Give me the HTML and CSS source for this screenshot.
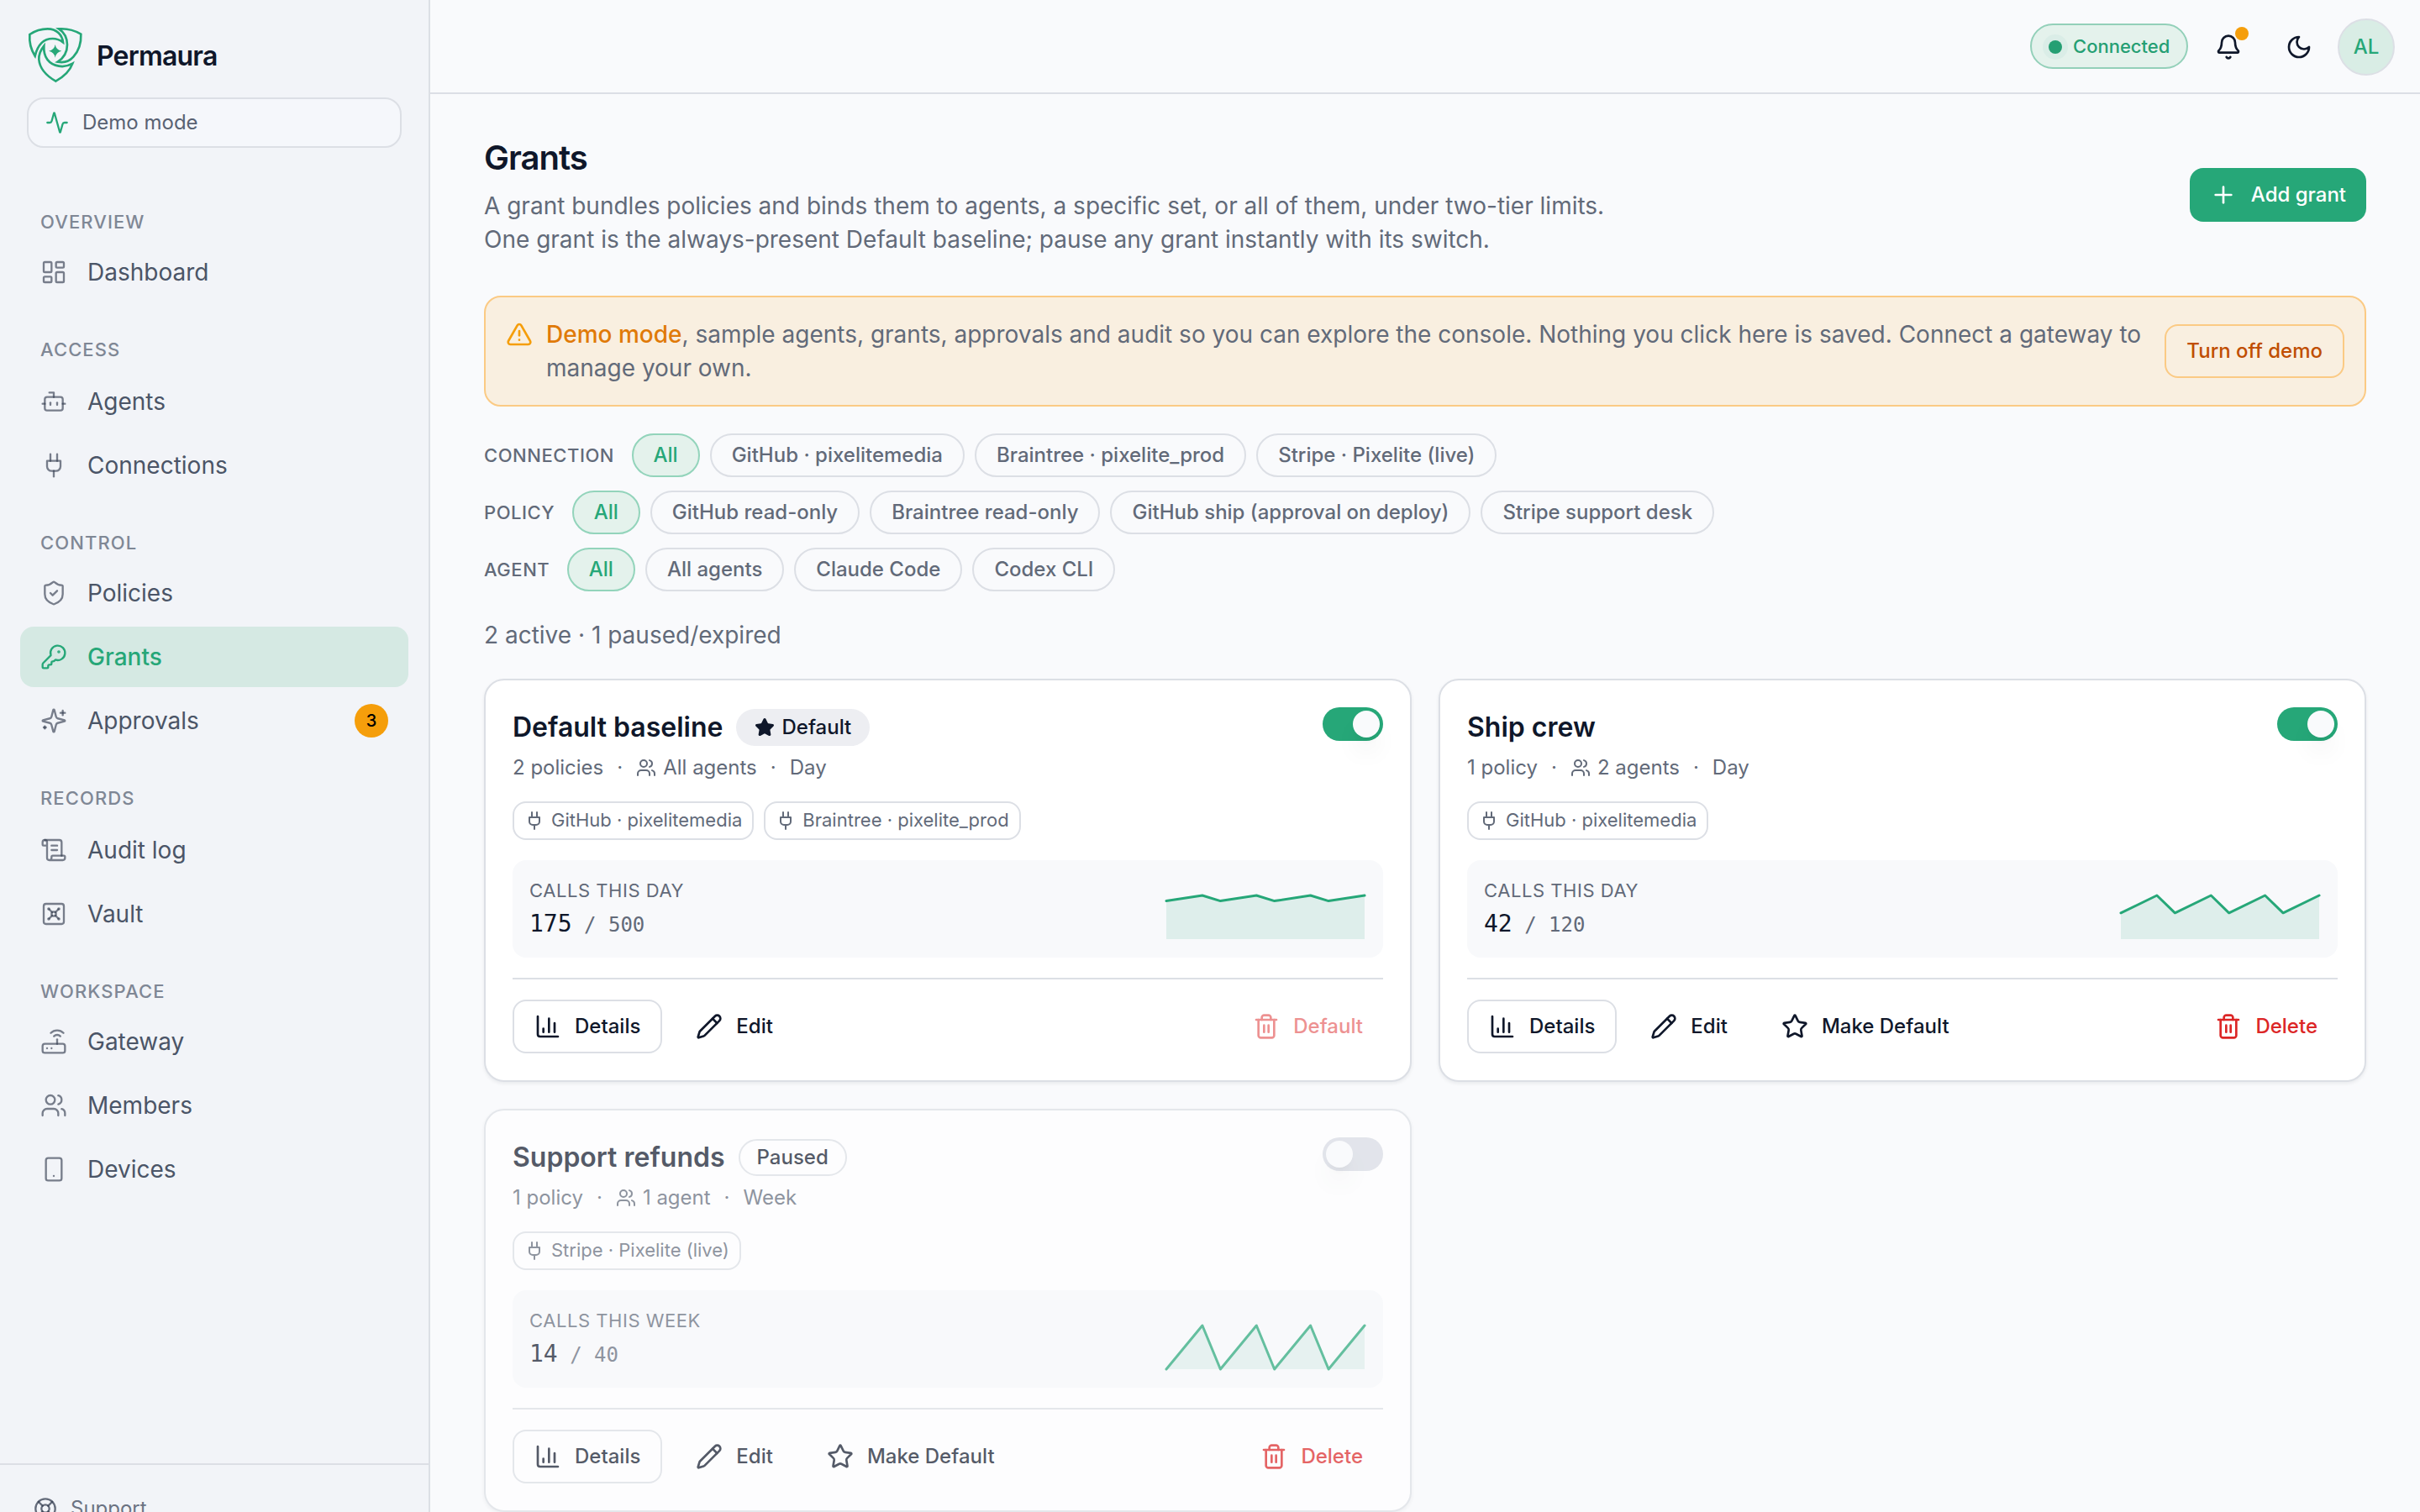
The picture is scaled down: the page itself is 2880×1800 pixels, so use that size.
FILE: index.html
```
<!DOCTYPE html>
<html lang="en">
<head>
<meta charset="utf-8">
<title>Grants · Permaura</title>
<link rel="stylesheet" href="styles.css">
</head>
<body>
<svg class="sprite" aria-hidden="true">
  <symbol id="activity" viewBox="0 0 24 24"><path d="M22 12h-2.48a2 2 0 0 0-1.93 1.46l-2.35 8.36a.25.25 0 0 1-.48 0L9.24 2.18a.25.25 0 0 0-.48 0l-2.35 8.36A2 2 0 0 1 4.49 12H2"/></symbol>
  <symbol id="dashboard" viewBox="0 0 24 24"><rect width="7" height="9" x="3" y="3" rx="1"/><rect width="7" height="5" x="14" y="3" rx="1"/><rect width="7" height="9" x="14" y="12" rx="1"/><rect width="7" height="5" x="3" y="16" rx="1"/></symbol>
  <symbol id="bot" viewBox="0 0 24 24"><path d="M12 8V4H8"/><rect width="16" height="12" x="4" y="8" rx="2"/><path d="M2 14h2"/><path d="M20 14h2"/><path d="M15 13v2"/><path d="M9 13v2"/></symbol>
  <symbol id="plug" viewBox="0 0 24 24"><path d="M12 22v-5"/><path d="M9 8V2"/><path d="M15 8V2"/><path d="M18 8v5a4 4 0 0 1-4 4h-4a4 4 0 0 1-4-4V8Z"/></symbol>
  <symbol id="shield" viewBox="0 0 24 24"><path d="M20 13c0 5-3.5 7.5-7.66 8.95a1 1 0 0 1-.67-.01C7.5 20.5 4 18 4 13V6a1 1 0 0 1 1-1c2 0 4.5-1.2 6.24-2.72a1.17 1.17 0 0 1 1.52 0C14.51 3.81 17 5 19 5a1 1 0 0 1 1 1z"/><path d="m9 12 2 2 4-4"/></symbol>
  <symbol id="key" viewBox="0 0 24 24"><path d="M2.586 17.414A2 2 0 0 0 2 18.828V21a1 1 0 0 0 1 1h3a1 1 0 0 0 1-1v-1a1 1 0 0 1 1-1h1a1 1 0 0 0 1-1v-1a1 1 0 0 1 1-1h.172a2 2 0 0 0 1.414-.586l.814-.814a6.5 6.5 0 1 0-4-4z"/><circle cx="16.5" cy="7.5" r=".5" fill="currentColor"/></symbol>
  <symbol id="sparkles" viewBox="0 0 24 24"><path d="M9.937 15.5A2 2 0 0 0 8.5 14.063l-6.135-1.582a.5.5 0 0 1 0-.962L8.5 9.936A2 2 0 0 0 9.937 8.5l1.582-6.135a.5.5 0 0 1 .963 0L14.063 8.5A2 2 0 0 0 15.5 9.937l6.135 1.581a.5.5 0 0 1 0 .964L15.5 14.063a2 2 0 0 0-1.437 1.437l-1.582 6.135a.5.5 0 0 1-.963 0z"/><path d="M20 3v4"/><path d="M22 5h-4"/><path d="M4 17v2"/><path d="M5 18H3"/></symbol>
  <symbol id="scroll" viewBox="0 0 24 24"><path d="M15 12h-5"/><path d="M15 8h-5"/><path d="M19 17V5a2 2 0 0 0-2-2H4"/><path d="M8 21h12a2 2 0 0 0 2-2v-1a1 1 0 0 0-1-1H11a1 1 0 0 0-1 1v1a2 2 0 1 1-4 0V5a2 2 0 1 0-4 0v2a1 1 0 0 0 1 1h3"/></symbol>
  <symbol id="vault" viewBox="0 0 24 24"><rect width="18" height="18" x="3" y="3" rx="2"/><circle cx="7.5" cy="7.5" r=".5" fill="currentColor"/><path d="m7.9 7.9 2.7 2.7"/><circle cx="16.5" cy="7.5" r=".5" fill="currentColor"/><path d="m13.4 10.6 2.7-2.7"/><circle cx="7.5" cy="16.5" r=".5" fill="currentColor"/><path d="m7.9 16.1 2.7-2.7"/><circle cx="16.5" cy="16.5" r=".5" fill="currentColor"/><path d="m13.4 13.4 2.7 2.7"/><circle cx="12" cy="12" r="2"/></symbol>
  <symbol id="router" viewBox="0 0 24 24"><rect width="20" height="8" x="2" y="14" rx="2"/><path d="M6.01 18H6"/><path d="M10.01 18H10"/><path d="M15 10v4"/><path d="M17.84 7.17a4 4 0 0 0-5.66 0"/><path d="M20.66 4.34a8 8 0 0 0-11.31 0"/></symbol>
  <symbol id="users" viewBox="0 0 24 24"><path d="M16 21v-2a4 4 0 0 0-4-4H6a4 4 0 0 0-4 4v2"/><circle cx="9" cy="7" r="4"/><path d="M22 21v-2a4 4 0 0 0-3-3.87"/><path d="M16 3.13a4 4 0 0 1 0 7.75"/></symbol>
  <symbol id="phone" viewBox="0 0 24 24"><rect width="14" height="20" x="5" y="2" rx="2"/><path d="M12 18h.01"/></symbol>
  <symbol id="buoy" viewBox="0 0 24 24"><circle cx="12" cy="12" r="10"/><path d="m4.93 4.93 4.24 4.24"/><path d="m14.83 9.17 4.24-4.24"/><path d="m14.83 14.83 4.24 4.24"/><path d="m9.17 14.83-4.24 4.24"/><circle cx="12" cy="12" r="4"/></symbol>
  <symbol id="bell" viewBox="0 0 24 24"><path d="M10.268 21a2 2 0 0 0 3.464 0"/><path d="M3.262 15.326A1 1 0 0 0 4 17h16a1 1 0 0 0 .74-1.673C19.41 13.956 18 12.499 18 8A6 6 0 0 0 6 8c0 4.499-1.411 5.956-2.738 7.326"/></symbol>
  <symbol id="moon" viewBox="0 0 24 24"><path d="M12 3a6 6 0 0 0 9 9 9 9 0 1 1-9-9Z"/></symbol>
  <symbol id="plus" viewBox="0 0 24 24"><path d="M5 12h14"/><path d="M12 5v14"/></symbol>
  <symbol id="alert" viewBox="0 0 24 24"><path d="m21.73 18-8-14a2 2 0 0 0-3.48 0l-8 14A2 2 0 0 0 4 21h16a2 2 0 0 0 1.73-3"/><path d="M12 9v4"/><path d="M12 17h.01"/></symbol>
  <symbol id="chart" viewBox="0 0 24 24"><path d="M3 3v16a2 2 0 0 0 2 2h16"/><path d="M18 17V9"/><path d="M13 17V5"/><path d="M8 17v-3"/></symbol>
  <symbol id="pencil" viewBox="0 0 24 24"><path d="M21.174 6.812a1 1 0 0 0-3.986-3.987L3.842 16.174a2 2 0 0 0-.5.83l-1.321 4.352a.5.5 0 0 0 .623.622l4.353-1.32a2 2 0 0 0 .83-.497z"/><path d="m15 5 4 4"/></symbol>
  <symbol id="star" viewBox="0 0 24 24"><path d="M11.525 2.295a.53.53 0 0 1 .95 0l2.31 4.679a2.123 2.123 0 0 0 1.595 1.16l5.166.756a.53.53 0 0 1 .294.904l-3.736 3.638a2.123 2.123 0 0 0-.611 1.878l.882 5.14a.53.53 0 0 1-.771.56l-4.618-2.428a2.122 2.122 0 0 0-1.973 0L6.396 21.01a.53.53 0 0 1-.77-.56l.881-5.139a2.122 2.122 0 0 0-.611-1.879L2.16 9.795a.53.53 0 0 1 .294-.906l5.165-.755a2.122 2.122 0 0 0 1.597-1.16z"/></symbol>
  <symbol id="trash" viewBox="0 0 24 24"><path d="M3 6h18"/><path d="M19 6v14c0 1-1 2-2 2H7c-1 0-2-1-2-2V6"/><path d="M8 6V4c0-1 1-2 2-2h4c1 0 2 1 2 2v2"/><path d="M10 11v6"/><path d="M14 11v6"/></symbol>
</svg>

<div class="app">
  <aside class="sidebar">
    <div class="brand">
      <svg class="brand-mark" viewBox="96 93 204 204">
        <path d="M106 123C125 110 148 103 170 103C202 103 222 124 225 151C212 141 199 138 188 138C155 138 134 162 125 200C111 178 104 150 106 123Z"/>
        <path d="M210 103C240 101 266 108 289 122C290 150 285 178 262 203C248 219 228 225 206 221C228 207 240 188 240 160C240 136 230 116 210 103Z"/>
        <path d="M157 164C144 180 138 196 139 213C142 245 168 272 199 290C230 273 250 252 259 227C243 236 226 239 210 236C176 231 154 205 157 164Z"/>
        <path class="spark" d="M197 159Q200 178 220 182Q200 186 197 206Q194 186 174 182Q194 178 197 159Z"/>
      </svg>
      <span class="brand-name">Permaura</span>
    </div>
    <div class="mode"><svg class="icon icon-mode"><use href="#activity"/></svg><span>Demo mode</span></div>
    <nav class="nav">
      <section class="group">
        <h2 class="group-title">OVERVIEW</h2>
        <a class="item"><svg class="icon"><use href="#dashboard"/></svg>Dashboard</a>
      </section>
      <section class="group">
        <h2 class="group-title">ACCESS</h2>
        <a class="item"><svg class="icon"><use href="#bot"/></svg>Agents</a>
        <a class="item"><svg class="icon"><use href="#plug"/></svg>Connections</a>
      </section>
      <section class="group">
        <h2 class="group-title">CONTROL</h2>
        <a class="item"><svg class="icon"><use href="#shield"/></svg>Policies</a>
        <a class="item active"><svg class="icon"><use href="#key"/></svg>Grants</a>
        <a class="item"><svg class="icon"><use href="#sparkles"/></svg>Approvals<span class="count">3</span></a>
      </section>
      <section class="group">
        <h2 class="group-title">RECORDS</h2>
        <a class="item"><svg class="icon"><use href="#scroll"/></svg>Audit log</a>
        <a class="item"><svg class="icon"><use href="#vault"/></svg>Vault</a>
      </section>
      <section class="group">
        <h2 class="group-title">WORKSPACE</h2>
        <a class="item"><svg class="icon"><use href="#router"/></svg>Gateway</a>
        <a class="item"><svg class="icon"><use href="#users"/></svg>Members</a>
        <a class="item"><svg class="icon"><use href="#phone"/></svg>Devices</a>
      </section>
    </nav>
    <div class="sidebar-foot"><a class="support"><svg class="icon icon-mode"><use href="#buoy"/></svg>Support</a></div>
  </aside>

  <div class="page">
    <header class="topbar">
      <span class="status"><i class="status-dot"></i>Connected</span>
      <span class="top-icon"><svg class="icon"><use href="#bell"/></svg><i class="notice"></i></span>
      <span class="top-icon"><svg class="icon"><use href="#moon"/></svg></span>
      <span class="avatar">AL</span>
    </header>

    <main class="main">
      <div class="head">
        <div>
          <h1 class="title">Grants</h1>
          <p class="lead">A grant bundles policies and binds them to agents, a specific set, or all of them, under two-tier limits.<br>One grant is the always-present Default baseline; pause any grant instantly with its switch.</p>
        </div>
        <button class="btn primary"><svg class="icon"><use href="#plus"/></svg>Add grant</button>
      </div>

      <div class="banner">
        <svg class="icon banner-icon"><use href="#alert"/></svg>
        <p class="banner-text"><strong>Demo mode</strong>, sample agents, grants, approvals and audit so you can explore the console. Nothing you click here is saved. Connect a gateway to manage your own.</p>
        <button class="btn warn">Turn off demo</button>
      </div>

      <div class="filters">
        <div class="filter"><span class="filter-label">CONNECTION</span><div class="pills"><span class="pill on">All</span><span class="pill">GitHub · pixelitemedia</span><span class="pill">Braintree · pixelite_prod</span><span class="pill">Stripe · Pixelite (live)</span></div></div>
        <div class="filter"><span class="filter-label">POLICY</span><div class="pills"><span class="pill on">All</span><span class="pill">GitHub read-only</span><span class="pill">Braintree read-only</span><span class="pill">GitHub ship (approval on deploy)</span><span class="pill">Stripe support desk</span></div></div>
        <div class="filter"><span class="filter-label">AGENT</span><div class="pills"><span class="pill on">All</span><span class="pill">All agents</span><span class="pill">Claude Code</span><span class="pill">Codex CLI</span></div></div>
      </div>

      <p class="summary">2 active · 1 paused/expired</p>

      <div class="cards">
        <article class="card">
          <div class="card-head">
            <div>
              <div class="card-title"><h3>Default baseline</h3><span class="badge solid"><svg class="icon sm filled"><use href="#star"/></svg>Default</span></div>
              <div class="meta"><span>2 policies</span><span>·</span><span class="with-icon"><svg class="icon sm"><use href="#users"/></svg>All agents</span><span>·</span><span>Day</span></div>
            </div>
            <span class="switch on"><i class="knob"></i></span>
          </div>
          <div class="tags"><span class="tag"><svg class="icon sm"><use href="#plug"/></svg>GitHub · pixelitemedia</span><span class="tag"><svg class="icon sm"><use href="#plug"/></svg>Braintree · pixelite_prod</span></div>
          <div class="usage">
            <div><div class="usage-label">CALLS THIS DAY</div><div class="usage-value"><b>175</b> <span>/ 500</span></div></div>
            <svg class="spark-chart" viewBox="0 0 240 56"><path class="area" d="M2 8.6L44.9 2L66.4 8.6L109.3 2L130.7 8.6L173.6 2L195.1 8.6L238 2V54H2Z"/><path class="line" d="M2 8.6L44.9 2L66.4 8.6L109.3 2L130.7 8.6L173.6 2L195.1 8.6L238 2"/></svg>
          </div>
          <div class="actions">
            <button class="btn outline"><svg class="icon"><use href="#chart"/></svg>Details</button>
            <button class="btn ghost"><svg class="icon"><use href="#pencil"/></svg>Edit</button>
            <button class="btn ghost danger disabled"><svg class="icon"><use href="#trash"/></svg>Default</button>
          </div>
        </article>

        <article class="card">
          <div class="card-head">
            <div>
              <div class="card-title"><h3>Ship crew</h3></div>
              <div class="meta"><span>1 policy</span><span>·</span><span class="with-icon"><svg class="icon sm"><use href="#users"/></svg>2 agents</span><span>·</span><span>Day</span></div>
            </div>
            <span class="switch on"><i class="knob"></i></span>
          </div>
          <div class="tags"><span class="tag"><svg class="icon sm"><use href="#plug"/></svg>GitHub · pixelitemedia</span></div>
          <div class="usage">
            <div><div class="usage-label">CALLS THIS DAY</div><div class="usage-value"><b>42</b> <span>/ 120</span></div></div>
            <svg class="spark-chart" viewBox="0 0 240 56"><path class="area" d="M2 22.8L44.9 2L66.4 22.8L109.3 2L130.7 22.8L173.6 2L195.1 22.8L238 2V54H2Z"/><path class="line" d="M2 22.8L44.9 2L66.4 22.8L109.3 2L130.7 22.8L173.6 2L195.1 22.8L238 2"/></svg>
          </div>
          <div class="actions">
            <button class="btn outline"><svg class="icon"><use href="#chart"/></svg>Details</button>
            <button class="btn ghost"><svg class="icon"><use href="#pencil"/></svg>Edit</button>
            <button class="btn ghost"><svg class="icon"><use href="#star"/></svg>Make Default</button>
            <button class="btn ghost danger"><svg class="icon"><use href="#trash"/></svg>Delete</button>
          </div>
        </article>

        <article class="card paused">
          <div class="card-head">
            <div>
              <div class="card-title"><h3>Support refunds</h3><span class="badge">Paused</span></div>
              <div class="meta"><span>1 policy</span><span>·</span><span class="with-icon"><svg class="icon sm"><use href="#users"/></svg>1 agent</span><span>·</span><span>Week</span></div>
            </div>
            <span class="switch"><i class="knob"></i></span>
          </div>
          <div class="tags"><span class="tag"><svg class="icon sm"><use href="#plug"/></svg>Stripe · Pixelite (live)</span></div>
          <div class="usage">
            <div><div class="usage-label">CALLS THIS WEEK</div><div class="usage-value"><b>14</b> <span>/ 40</span></div></div>
            <svg class="spark-chart" viewBox="0 0 240 56"><path class="area" d="M2 54L44.9 2L66.4 54L109.3 2L130.7 54L173.6 2L195.1 54L238 2V54H2Z"/><path class="line" d="M2 54L44.9 2L66.4 54L109.3 2L130.7 54L173.6 2L195.1 54L238 2"/></svg>
          </div>
          <div class="actions">
            <button class="btn outline"><svg class="icon"><use href="#chart"/></svg>Details</button>
            <button class="btn ghost"><svg class="icon"><use href="#pencil"/></svg>Edit</button>
            <button class="btn ghost"><svg class="icon"><use href="#star"/></svg>Make Default</button>
            <button class="btn ghost danger"><svg class="icon"><use href="#trash"/></svg>Delete</button>
          </div>
        </article>
      </div>
    </main>
  </div>
</div>
</body>
</html>
```
FILE: styles.css
```
:root {
  --bg: #f9fafc;
  --side: #f2f4f8;
  --ink: #0f172a;
  --muted: #626a79;
  --line: #dcdfe5;
  --green: #26a778;
  --amber: #f59e0b;
}

* { box-sizing: border-box; }

body {
  margin: 0;
  height: 1800px;
  overflow: hidden;
  background: var(--bg);
  color: var(--ink);
  font: 400 28px/40px Inter, "Liberation Sans", sans-serif;
}

h1, h2, h3, p { margin: 0; }

.sprite { position: absolute; width: 0; height: 0; }

.icon {
  flex: none;
  display: block;
  width: 32px;
  height: 32px;
  fill: none;
  stroke: currentColor;
  stroke-width: 2;
  stroke-linecap: round;
  stroke-linejoin: round;
}
.icon.sm { width: 24px; height: 24px; }
.icon.filled { fill: currentColor; }

.app { display: flex; height: 1800px; }

/* Sidebar */
.sidebar {
  flex: none;
  display: flex;
  flex-direction: column;
  width: 512px;
  padding-top: 31px;
  background: var(--side);
  border-right: 2px solid var(--line);
  overflow: hidden;
}
.brand {
  display: flex;
  align-items: center;
  gap: 15px;
  height: 68px;
  margin-left: 32px;
}
.brand-mark {
  width: 68px;
  height: 68px;
  fill: none;
  stroke: var(--green);
  stroke-width: 8;
  stroke-linejoin: miter;
}
.brand-mark .spark { fill: var(--green); stroke: none; }
.brand-name {
  padding-top: 3px;
  font-size: 32px;
  font-weight: 600;
  letter-spacing: -0.025em;
}
.mode {
  display: flex;
  align-items: center;
  gap: 16px;
  flex: none;
  height: 60px;
  margin: 17px 32px 0;
  padding: 0 20px;
  border: 2px solid var(--line);
  border-radius: 20px;
  background: #f5f7fb;
  color: #596273;
  font-size: 24px;
}
.icon-mode { width: 28px; height: 28px; }
.mode .icon { color: var(--green); }

.nav {
  flex: 1;
  display: flex;
  flex-direction: column;
  gap: 40px;
  padding: 72px 24px 0;
}
.group { display: flex; flex-direction: column; gap: 4px; }
.group-title {
  height: 32px;
  margin: 0 0 4px 24px;
  color: #7f8795;
  font-size: 22px;
  font-weight: 500;
  line-height: 32px;
  letter-spacing: 0.05em;
}
.group:nth-child(even) .group-title { margin-bottom: 6px; }
.item {
  display: flex;
  align-items: center;
  gap: 24px;
  height: 72px;
  padding: 0 24px;
  border-radius: 16px;
  color: #4b5567;
}
.item .icon { color: rgba(54, 63, 82, 0.66); stroke-width: 1.75; }
.item.active { background: #d5e9e3; color: var(--green); font-weight: 500; }
.item.active .icon { color: var(--green); }
.count {
  width: 40px;
  height: 40px;
  margin-left: auto;
  border-radius: 50%;
  background: var(--amber);
  color: #000;
  font-size: 20px;
  font-weight: 500;
  line-height: 40px;
  text-align: center;
}
.sidebar-foot {
  flex: none;
  height: 58px;
  padding: 34px 40px 0;
  border-top: 2px solid var(--line);
}
.support {
  display: flex;
  align-items: center;
  gap: 16px;
  height: 36px;
  color: #6b7382;
  font-size: 24px;
}
.support .icon { color: rgba(54, 63, 82, 0.75); }

/* Top bar */
.page { flex: 1; min-width: 0; }
.topbar {
  display: flex;
  align-items: center;
  justify-content: flex-end;
  height: 112px;
  padding: 22px 30px 20px 0;
  border-bottom: 2px solid var(--line);
}
.status {
  display: flex;
  align-items: center;
  gap: 13px;
  width: 188px;
  height: 54px;
  margin: 0 32px 2px 0;
  padding-left: 20px;
  border: 2px solid #93d0b9;
  border-radius: 27px;
  background: #e4f2ec;
  color: #259f73;
  font-size: 22px;
  font-weight: 500;
  line-height: 32px;
}
.status-dot {
  width: 16px;
  height: 16px;
  margin-top: 2px;
  border-radius: 50%;
  background: #259f73;
  box-shadow: 0 0 0 7px #daede7;
}
.top-icon { position: relative; margin-right: 52px; }
.top-icon + .top-icon { margin-right: 30px; }
.notice {
  position: absolute;
  top: -8px;
  right: -8px;
  width: 16px;
  height: 16px;
  border-radius: 50%;
  background: var(--amber);
}
.avatar {
  width: 68px;
  height: 68px;
  border: 2px solid var(--line);
  border-radius: 50%;
  background: #d9ede5;
  color: var(--green);
  font-size: 24px;
  font-weight: 500;
  line-height: 63px;
  text-align: center;
}

/* Content */
.main { padding: 48px 64px 0; }
.head { display: flex; align-items: center; justify-content: space-between; }
.title {
  margin-bottom: 10px;
  font-size: 40px;
  font-weight: 600;
  line-height: 55px;
  letter-spacing: -0.025em;
}
.lead { margin-bottom: -1px; color: var(--muted); }

.btn {
  display: flex;
  align-items: center;
  gap: 16px;
  flex: none;
  height: 64px;
  padding: 0 24px;
  border: 0;
  border-radius: 16px;
  background: none;
  color: var(--ink);
  font: 500 24px/32px Inter, "Liberation Sans", sans-serif;
}
.btn.primary { gap: 17px; background: var(--green); color: #fff; }
.btn.outline { border: 2px solid var(--line); }
.btn.warn { border: 2px solid #fbca84; color: #c04e00; }
.btn.danger { margin-left: auto; color: #dc2626; }
.btn.disabled { opacity: 0.5; }

.banner {
  display: flex;
  align-items: center;
  gap: 16px;
  margin-top: 48px;
  padding: 24px;
  border: 2px solid #fbca84;
  border-radius: 20px;
  background: #f9efe0;
}
.banner-icon { align-self: flex-start; margin-top: 4px; color: var(--amber); }
.banner-text { flex: 1; color: var(--muted); }
.banner-text strong { color: #e07a08; font-weight: 500; }

.filters { display: flex; flex-direction: column; gap: 16px; margin-top: 32px; }
.filter { display: flex; align-items: center; gap: 20.5px; }
.filter-label {
  color: var(--muted);
  font-size: 22px;
  font-weight: 500;
  letter-spacing: 0.025em;
}
.pills { display: flex; gap: 12px; }
.pill {
  height: 52px;
  padding: 0 24px;
  border: 2px solid var(--line);
  border-radius: 26px;
  color: var(--muted);
  font-size: 24px;
  font-weight: 500;
  line-height: 47px;
}
.pill.on { border-color: #93d4bb; background: #e4f2ec; color: var(--green); }

.summary { margin: 32px 0; color: var(--muted); }

/* Grant cards */
.cards { display: grid; grid-template-columns: 1fr 1fr; gap: 32px; }
.card {
  display: flex;
  flex-direction: column;
  gap: 24px;
  height: 480px;
  padding: 32px;
  border: 2px solid var(--line);
  border-radius: 24px;
  background: #fff;
  box-shadow: 0 2px 4px rgba(15, 23, 42, 0.07);
}
.card.paused { opacity: 0.7; }
.card-head { display: flex; justify-content: space-between; height: 88px; }
.card-title { display: flex; align-items: center; gap: 16px; height: 48px; }
.card-title h3 { font-size: 32px; font-weight: 600; line-height: 50px; }
.badge {
  display: flex;
  align-items: center;
  gap: 8px;
  height: 44px;
  padding: 0 20px;
  border: 2px solid var(--line);
  border-radius: 22px;
  font-size: 24px;
  font-weight: 500;
  line-height: 36px;
}
.badge.solid { border-color: transparent; background: #edeef2 border-box; }
.meta {
  display: flex;
  align-items: center;
  gap: 16px;
  height: 32px;
  margin-top: 8px;
  color: var(--muted);
  font-size: 24px;
  line-height: 32px;
}
.with-icon { display: flex; align-items: center; gap: 8px; }

.switch {
  display: flex;
  width: 72px;
  height: 40px;
  padding: 4px;
  border-radius: 20px;
  background: #d9dce4;
}
.switch.on { justify-content: flex-end; background: var(--green); }
.knob {
  width: 32px;
  height: 32px;
  border-radius: 50%;
  background: var(--bg);
  box-shadow: 0 20px 30px -6px rgba(0, 0, 0, 0.1), 0 8px 12px -8px rgba(0, 0, 0, 0.1);
}

.tags { display: flex; gap: 12px; }
.tag {
  display: flex;
  align-items: center;
  gap: 8px;
  height: 46px;
  padding: 0 12px 1px;
  border: 2px solid var(--line);
  border-radius: 16px;
  color: var(--muted);
  font-size: 22px;
  line-height: 31px;
}

.usage {
  display: flex;
  align-items: flex-end;
  justify-content: space-between;
  height: 116px;
  padding: 20px;
  border-radius: 16px;
  background: #f8f9fb;
  color: var(--muted);
}
.usage-label {
  height: 32px;
  font-size: 22px;
  line-height: 32px;
  letter-spacing: 0.025em;
}
.usage-value {
  height: 44px;
  font-family: "DejaVu Sans Mono", "Liberation Mono", monospace;
  font-size: 24px;
  line-height: 48px;
}
.usage-value b { color: var(--ink); font-size: 28px; font-weight: 400; }
.spark-chart { width: 240px; height: 56px; overflow: visible; }
.area { fill: var(--green); opacity: 0.12; }
.line {
  fill: none;
  stroke: var(--green);
  stroke-width: 3;
  stroke-linecap: round;
  stroke-linejoin: round;
}

.actions {
  display: flex;
  gap: 16px;
  padding-top: 24px;
  border-top: 2px solid var(--line);
}
```
